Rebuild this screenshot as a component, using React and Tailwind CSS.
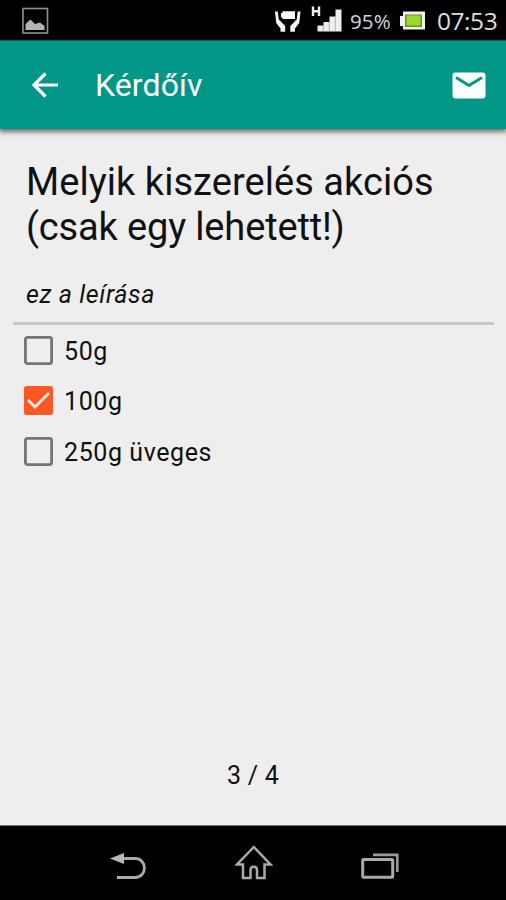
import React from "react";

function StatusBar() {
  return (
    <div className="h-10 shrink-0 bg-black flex items-start justify-between">
      <svg className="ml-[22px] mt-[7px]" width="27" height="28" viewBox="0 0 27 28">
        <rect x="1" y="1.500" width="24.500" height="24.500" fill="none" stroke="#8f8f8f" strokeWidth="1.600" />
        <path d="M3.500 23V17.500L5 15.500L8.500 12.500L13 17L18 15.500L22.500 19V23Z" fill="#b4b4b4" />
      </svg>
      <div className="flex items-start h-10 font-['Open_Sans','Noto_Sans',sans-serif] text-[#d4d4d4]">
        <svg width="68" height="40" viewBox="0 0 68 40">
          <path d="M1 11.500H3.800L4.800 19.500L11.200 26V31.800H6.500V28.500L2.200 23Z" fill="#f2f2f2" />
          <path d="M26.500 11.500H23.700L22.700 19.500L16.300 26V31.800H21V28.500L25.300 23Z" fill="#f2f2f2" />
          <path d="M8.500 11.200H21V19H8.500V17.500H7V13H8.500Z" fill="#fafafa" />
          <path d="M39 6.500V16M45 6.500V16M39 11.200H45" stroke="#eee" strokeWidth="2.400" />
          <path d="M43.500 25.500H49.500V31.500H43.500ZM49.500 22H55.500V31.500H49.500ZM55.500 16.500H61.500V31.500H55.500ZM61.500 9.500H67.500V31.500H61.500Z" fill="#eee" />
          <path d="M49.300 25.500V31.500M55.300 22V31.500M61.300 16.500V31.500" stroke="#999" strokeWidth="0.700" />
        </svg>
        <span className="ml-2 mt-[7px] w-[41px] text-[20.500px] leading-7 tracking-[0.1px] whitespace-nowrap">95%</span>
        <svg className="ml-[9px] mt-[11px]" width="26" height="20" viewBox="0 0 26 20">
          <path d="M3 0.500H25V18.500H3V15H0V5H3Z" fill="#f0f0f0" />
          <rect x="5" y="3.500" width="17" height="12.500" fill="#5f9716" />
          <rect x="6.500" y="4.500" width="14" height="10" fill="#9bd82c" />
        </svg>
        <span className="ml-[11px] mt-1 w-[69px] text-[24.500px] leading-[34px] tracking-[-0.450px] whitespace-nowrap text-[#dedede]">07:53</span>
      </div>
    </div>
  );
}

function AppBar() {
  return (
    <header className="relative h-[89px] shrink-0 bg-[#009688] border-t border-[#00665d] flex items-center text-white shadow-[0_2px_5px_1px_rgba(0,0,0,0.55)]">
      <svg className="ml-8" width="27" height="26" viewBox="0 0 27 26">
        <path d="M26 13H2.500M13.500 1.500L2 13L13.500 24.500" fill="none" stroke="#fff" strokeWidth="3.200" />
      </svg>
      <h1 className="ml-9 flex-1 text-[32px] leading-10 font-normal tracking-[0.1px]">Kérdőív</h1>
      <svg className="mr-5" width="34" height="27" viewBox="0 0 34 27">
        <rect x="0.500" y="0.500" width="33" height="26" rx="3" fill="#fff" />
        <path d="M4 5.500L17 13.500L30 5.500" fill="none" stroke="#009688" strokeWidth="2.800" />
      </svg>
    </header>
  );
}

function Option({ label, checked }) {
  return (
    <label className="h-[50.5px] flex items-center">
      <svg className="ml-[24px]" width="29" height="29" viewBox="0 0 29 29">
        {checked ? (
          <>
            <rect x="0" y="0" width="29" height="29" rx="2.500" fill="#ff5722" />
            <path d="M4 14L11 21L25 7" fill="none" stroke="#f5eeee" strokeWidth="2.800" />
          </>
        ) : (
          <rect x="1.400" y="1.400" width="26.200" height="26.200" rx="2" fill="none" stroke="#757575" strokeWidth="2.800" />
        )}
      </svg>
      <span className="ml-[11px] mt-[3px] text-[25px] leading-8 tracking-[0.580px]">{label}</span>
    </label>
  );
}

function NavBar() {
  return (
    <nav className="h-[75px] shrink-0 bg-black border-t border-[#777] flex items-start">
      <svg className="ml-[110px] mt-[26px]" width="37" height="29" viewBox="0 0 37 29">
        <path d="M10 6.500H25C37.500 6.500 37.500 25.500 25 25.500H7" fill="none" stroke="#aaa" strokeWidth="2.800" />
        <path d="M0 6.500L14 1V12Z" fill="#b8b8b8" />
      </svg>
      <svg className="ml-[88px] mt-[18px]" width="38" height="38" viewBox="0 0 38 38">
        <path d="M18.800 3L2 20.500H8V34H15.500V26C15.500 21.500 22 21.500 22 26V34H29.500V20.500H35.500Z" fill="none" stroke="#aaa" strokeWidth="2.500" />
      </svg>
      <svg className="ml-[88px] mt-[26px]" width="39" height="29" viewBox="0 0 39 29">
        <rect x="1.700" y="7.400" width="30" height="17.800" rx="1" fill="none" stroke="#aaa" strokeWidth="3" />
        <path d="M12 2.800H36.300V20" fill="none" stroke="#999" strokeWidth="2.700" />
      </svg>
    </nav>
  );
}

export default function App() {
  return (
    <div className="w-[506px] h-[900px] flex flex-col overflow-hidden bg-[#eee] text-[#111] font-['Roboto',sans-serif]">
      <StatusBar />
      <AppBar />
      <main className="flex-1 flex flex-col">
        <h2 className="ml-[26px] mt-[31px] text-[38px] leading-[45px] font-normal whitespace-nowrap">
          <span className="tracking-[0.050px]">Melyik kiszerelés akciós</span>
          <br />
          <span className="tracking-[-0.150px]">(csak egy lehetett!)</span>
        </h2>
        <p className="ml-[26px] mt-[29px] text-[25px] leading-8 italic tracking-[0.600px]">ez a leírása</p>
        <div className="ml-[13px] mr-3 mt-[11px] h-[3px] bg-[#c8c8c8]" />
        <Option label="50g" />
        <Option label="100g" checked />
        <Option label="250g üveges" />
        <p className="mt-auto mb-[33px] text-center text-[25px] leading-8 tracking-[0.200px]">3 / 4</p>
      </main>
      <NavBar />
    </div>
  );
}
